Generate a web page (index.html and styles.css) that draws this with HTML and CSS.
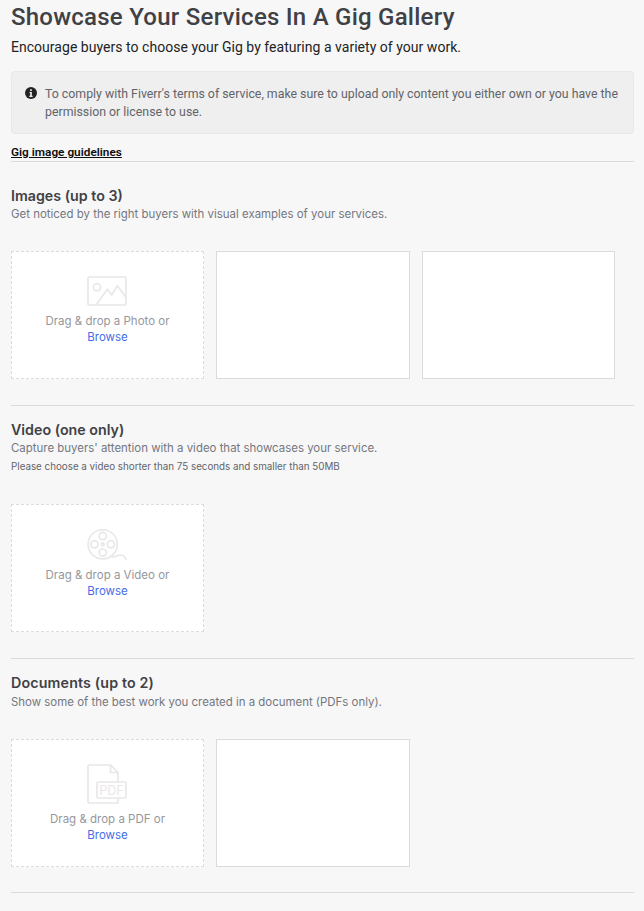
FILE: index.html
```html
<!DOCTYPE html>
<html lang="en">
<head>
<meta charset="utf-8">
<title>Gig Gallery</title>
<link rel="stylesheet" href="styles.css">
</head>
<body>
<main class="page">
  <h1 class="title">Showcase Your Services In A Gig Gallery</h1>
  <p class="lead">Encourage buyers to choose your Gig by featuring a variety of your work.</p>
  <div class="notice">
    <svg class="notice-icon" viewBox="0 0 16 16" width="12" height="12" aria-hidden="true"><circle cx="8" cy="8" r="8" fill="#222325"/><rect x="6.9" y="3" width="2.2" height="2.4" fill="#efefef"/><path d="M6 6.6h3.1v5.2H10.2v1.4H5.8v-1.4h1.1V8H6z" fill="#efefef"/></svg>
    <p class="notice-text">To comply with Fiverr's terms of service, make sure to upload only content you either own or you have the permission or license to use.</p>
  </div>
  <a class="guide" href="#">Gig image guidelines</a>

  <section class="section section-images">
    <h2 class="heading">Images (up to 3)</h2>
    <p class="sub">Get noticed by the right buyers with visual examples of your services.</p>
    <div class="slots slots-images">
      <div class="slot drop">
        <svg class="drop-icon" viewBox="0 0 40 30" width="40" height="30" aria-hidden="true"><g class="icon-line"><rect x="1" y="1" width="38" height="28" rx="1"/><circle cx="10" cy="11.3" r="3.6"/><path d="M9 29l11.3-15.7 4.4 5.7 5.6-9.3 8.7 11.6"/></g></svg>
        <span class="drop-text">Drag &amp; drop a Photo or</span>
        <a class="browse" href="#">Browse</a>
      </div>
      <div class="slot"></div>
      <div class="slot"></div>
    </div>
  </section>

  <section class="section section-video">
    <h2 class="heading">Video (one only)</h2>
    <p class="sub">Capture buyers' attention with a video that showcases your service.</p>
    <p class="note">Please choose a video shorter than 75 seconds and smaller than 50MB</p>
    <div class="slots slots-video">
      <div class="slot drop">
        <svg class="drop-icon" viewBox="0 0 40 32" width="40" height="32" aria-hidden="true"><g class="icon-line"><circle cx="15.7" cy="15.3" r="14.6"/><circle cx="15.7" cy="7" r="3.6"/><circle cx="15.7" cy="23.6" r="3.6"/><circle cx="7.4" cy="15.3" r="3.6"/><circle cx="24" cy="15.3" r="3.6"/><circle cx="15.7" cy="15.3" r="1.4"/><path d="M24.7 27.7c3 1 5.500-1.700 8.300-1.700 3 0 5.500 2 6 5"/></g></svg>
        <span class="drop-text">Drag &amp; drop a Video or</span>
        <a class="browse" href="#">Browse</a>
      </div>
    </div>
  </section>

  <section class="section section-docs">
    <h2 class="heading">Documents (up to 2)</h2>
    <p class="sub">Show some of the best work you created in a document (PDFs only).</p>
    <div class="slots slots-docs">
      <div class="slot drop">
        <svg class="drop-icon" viewBox="0 0 40 40" width="40" height="40" aria-hidden="true"><g class="icon-line"><path d="M31 18V8.500L23.500 1H2a1 1 0 0 0-1 1v36a1 1 0 0 0 1 1h29v-5"/><path d="M23.500 1v7.500H31"/><rect x="10" y="18" width="29" height="16" rx="1.500"/></g><text x="24.500" y="30.500" class="pdf-label">PDF</text></svg>
        <span class="drop-text">Drag &amp; drop a PDF or</span>
        <a class="browse" href="#">Browse</a>
      </div>
      <div class="slot"></div>
    </div>
  </section>
</main>
</body>
</html>
```
FILE: styles.css
```css
* { box-sizing: border-box; }
html, body { margin: 0; padding: 0; }
body {
  background: #f7f7f7;
  color: #404145;
  font-family: "Inter", "Liberation Sans", sans-serif;
  height: 911px;
  overflow: hidden;
}
.page { padding: 0 10px 0 11px; }
.title {
  margin: 0;
  font-family: "Roboto", "Liberation Sans", sans-serif;
  font-size: 24px;
  line-height: 34px;
  font-weight: 500;
  letter-spacing: 0.25px;
  color: #404145;
}
.lead {
  margin: 3px 0 0;
  font-family: "Roboto", "Liberation Sans", sans-serif;
  font-size: 14px;
  line-height: 20px;
  letter-spacing: 0.03px;
  color: #222325;
}
.notice {
  display: flex;
  gap: 8px;
  margin-top: 14px;
  height: 63px;
  padding: 13px 8px 0 13px;
  background: #efefef;
  border: 1px solid #e8e8e8;
  border-radius: 4px;
}
.notice-icon { flex: none; margin-top: 2px; }
.notice-text {
  margin: 0;
  font-family: "Roboto", "Liberation Sans", sans-serif;
  font-size: 12.33px;
  line-height: 18px;
  color: #62646a;
}
.guide {
  display: block;
  margin-top: 10px;
  padding-bottom: 1px;
  height: 17px;
  font-family: "Roboto", "Liberation Sans", sans-serif;
  font-size: 11.8px;
  line-height: 16px;
  font-weight: 600;
  color: #0e0e10;
  text-decoration: underline;
}
.section { border-top: 1px solid #dadbdd; }
.section-images { height: 244px; padding-top: 24px; }
.section-video { height: 253px; padding-top: 14px; }
.section-docs { height: 235px; padding-top: 14px; border-bottom: 1px solid #dadbdd; }
.section-docs .sub { margin-top: 1px; }
.section-docs .heading { letter-spacing: 0.15px; }
.heading {
  margin: 0;
  font-size: 14.25px;
  line-height: 20px;
  font-weight: 600;
  color: #404145;
}
.sub {
  margin: 0;
  font-size: 11.45px;
  line-height: 16px;
  color: #74767e;
}
.note {
  margin: 3px 0 0;
  font-size: 9.8px;
  line-height: 16px;
  color: #62646a;
}
.slots {
  display: grid;
  grid-template-columns: 193px 194px 193px;
  column-gap: 12px;
}
.slots-images { margin-top: 29px; height: 128px; }
.slots-video { margin-top: 29px; height: 128px; }
.slots-docs { margin-top: 29px; height: 128px; }
.slot {
  background: #fff;
  border: 1px solid #dadbdd;
}
.drop {
  border: 1px dashed #dcdcdc;
  display: flex;
  flex-direction: column;
  align-items: center;
  text-align: center;
}
.drop-icon { margin: 24px 1px 0 0; }
.icon-line {
  fill: none;
  stroke: #e8e8e8;
  stroke-width: 1.7;
}
.drop-text {
  margin-top: 7px;
  font-size: 11.5px;
  line-height: 16px;
  color: #95979d;
}
.slots-video .drop-text { margin-top: 6px; }
.browse {
  font-size: 11.5px;
  line-height: 16px;
  color: #446ee7;
  text-decoration: none;
}
.pdf-label {
  font-family: "Inter", "Liberation Sans", sans-serif;
  font-size: 12.5px;
  fill: #e8e8e8;
  text-anchor: middle;
}
```
